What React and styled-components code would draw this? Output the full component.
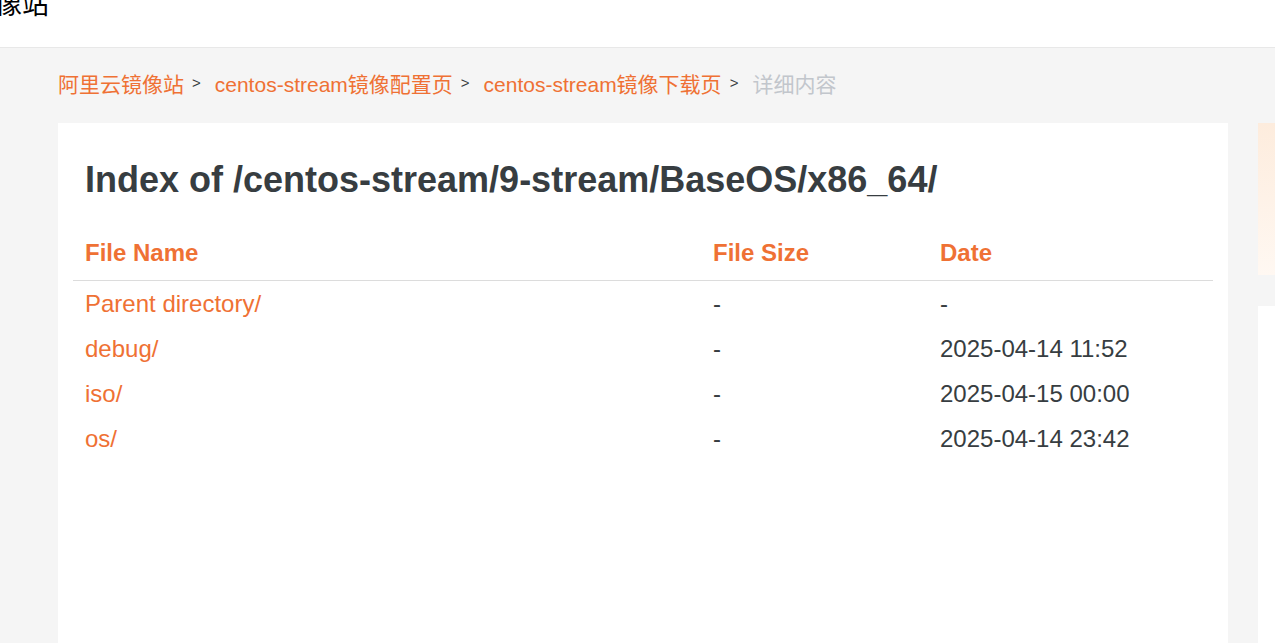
import React from "react";
import styled, { createGlobalStyle } from "styled-components";

const Global = createGlobalStyle`
  html, body { margin: 0; padding: 0; }
  * { box-sizing: border-box; }
  body {
    background: #f5f5f5;
    font-family: "Liberation Sans", Arial, "Noto Sans CJK SC", sans-serif;
    overflow: hidden;
  }
`;

const ORANGE = "#ef7134";
const TEXT = "#373d41";

const Header = styled.header`
  height: 48px;
  background: #fff;
  border-bottom: 1px solid #e8e8e8;
  overflow: hidden;
`;

const Logo = styled.div`
  margin: -16px 0 0 -5px;
  font-family: "Noto Sans CJK SC", sans-serif;
  font-size: 27px;
  line-height: 38px;
  color: #000;
`;

const Page = styled.div`
  padding-left: 58px;
`;

const Crumbs = styled.nav`
  display: flex;
  align-items: center;
  height: 75px;
  padding-bottom: 6px;
  font-family: "Liberation Sans", Arial, "Noto Sans CJK SC", sans-serif;
  font-size: 21px;
`;

const Crumb = styled.a`
  color: ${(p) => (p.$current ? "#c2c6cc" : ORANGE)};
  text-decoration: none;
`;

const Sep = styled.span`
  font-size: 15px;
  color: #373d41;
  margin: 0 14px 0 8px;
`;

const Body = styled.div`
  display: grid;
  grid-template-columns: 1170px 1fr;
  column-gap: 30px;
`;

const Card = styled.main`
  background: #fff;
  padding: 15px 15px 0;
  min-height: 520px;
`;

const Title = styled.h1`
  margin: 22px 0 26px;
  padding-left: 12px;
  font-size: 36px;
  line-height: 40px;
  font-weight: 700;
  color: ${TEXT};
`;

const Table = styled.table`
  width: 100%;
  border-collapse: collapse;
  table-layout: fixed;
  font-size: 24px;
`;

const Th = styled.th`
  text-align: left;
  font-weight: 700;
  color: ${ORANGE};
  padding: 12px 12px 13px;
  line-height: 29px;
  border-bottom: 1px solid #dcdcdc;
  width: ${(p) => p.$w}px;
`;

const Td = styled.td`
  padding: 9px 12px;
  line-height: 27px;
  color: ${TEXT};
  white-space: nowrap;
`;

const Link = styled.a`
  color: ${ORANGE};
  text-decoration: none;
`;

const Side = styled.aside`
  display: flex;
  flex-direction: column;
  gap: 31px;
`;

const Promo = styled.div`
  height: 152px;
  background: linear-gradient(180deg, #fdecdd 0%, #fff8f2 100%);
`;

const SideBox = styled.div`
  height: 400px;
  background: #fff;
`;

const rows = [
  { name: "Parent directory/", size: "-", date: "-" },
  { name: "debug/", size: "-", date: "2025-04-14 11:52" },
  { name: "iso/", size: "-", date: "2025-04-15 00:00" },
  { name: "os/", size: "-", date: "2025-04-14 23:42" },
];

export default function App() {
  return (
    <>
      <Global />
      <Header>
        <Logo>像站</Logo>
      </Header>
      <Page>
        <Crumbs>
          <Crumb href="#">阿里云镜像站</Crumb>
          <Sep>&gt;</Sep>
          <Crumb href="#">centos-stream镜像配置页</Crumb>
          <Sep>&gt;</Sep>
          <Crumb href="#">centos-stream镜像下载页</Crumb>
          <Sep>&gt;</Sep>
          <Crumb $current>详细内容</Crumb>
        </Crumbs>
        <Body>
          <Card>
            <Title>Index of /centos-stream/9-stream/BaseOS/x86_64/</Title>
            <Table>
              <thead>
                <tr>
                  <Th $w={628}>File Name</Th>
                  <Th $w={227}>File Size</Th>
                  <Th $w={285}>Date</Th>
                </tr>
              </thead>
              <tbody>
                {rows.map((r) => (
                  <tr key={r.name}>
                    <Td>
                      <Link href="#">{r.name}</Link>
                    </Td>
                    <Td>{r.size}</Td>
                    <Td>{r.date}</Td>
                  </tr>
                ))}
              </tbody>
            </Table>
          </Card>
          <Side>
            <Promo />
            <SideBox />
          </Side>
        </Body>
      </Page>
    </>
  );
}
